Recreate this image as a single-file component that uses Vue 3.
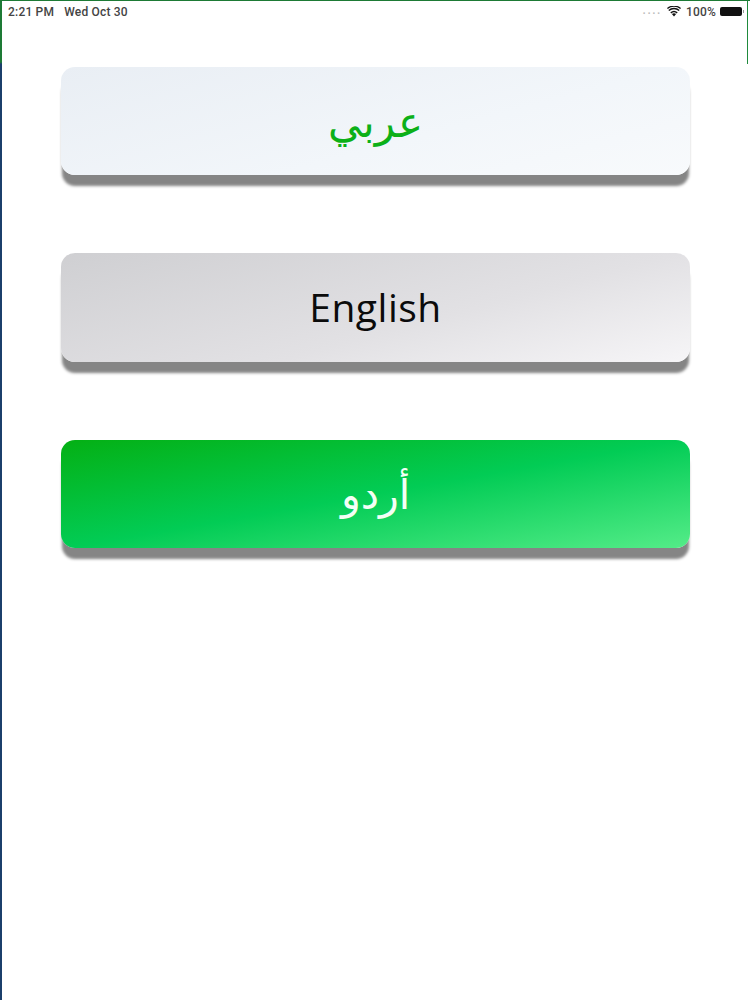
<script setup>
const languages = [
  { label: 'عربي', kind: 'arabic', lang: 'ar' },
  { label: 'English', kind: 'english', lang: 'en' },
  { label: 'أردو', kind: 'urdu', lang: 'ur' },
]
</script>

<template>
  <div class="screen">
    <div class="status-bar">
      <div class="status-left">
        <span>2:21 PM</span>
        <span>Wed Oct 30</span>
      </div>
      <div class="status-right">
        <span class="signal">....</span>
        <svg class="wifi" width="14" height="11" viewBox="0 0 14 11">
          <path d="M7 10.6 4.9 8.1a3.2 3.2 0 0 1 4.2 0z" fill="#111" />
          <path d="M3.8 6.9a5 5 0 0 1 6.4 0" fill="none" stroke="#111" stroke-width="1.5" />
          <path d="M1.8 4.5a8 8 0 0 1 10.4 0" fill="none" stroke="#111" stroke-width="1.5" />
          <path d="M.4 2.5a10.2 10.2 0 0 1 13.2 0" fill="none" stroke="#111" stroke-width="1.2" />
        </svg>
        <span class="percent">100%</span>
        <span class="battery"></span>
      </div>
    </div>
    <div class="buttons">
      <button
        v-for="item in languages"
        :key="item.kind"
        class="lang-button"
        :class="item.kind"
        :lang="item.lang"
        type="button">
        {{ item.label }}
      </button>
    </div>
  </div>
</template>

<style>
html,
body {
  margin: 0;
  background: #fff;
}
</style>

<style scoped>
.screen {
  position: relative;
  box-sizing: border-box;
  width: 750px;
  height: 1000px;
  overflow: hidden;
  background: #fff;
  border-top: 1px solid #2a2f2a;
  border-left: 2px solid;
  border-image: linear-gradient(180deg, #1d7a35 0, #1d7a35 62px, #1b3f6b 64px, #1b3f6b 100%) 1;
}
/* green edge on the right of the status area */
.screen::after {
  content: "";
  position: absolute;
  top: 0;
  right: 2px;
  width: 1px;
  height: 63px;
  background: #1f8a3c;
}
.status-bar {
  display: flex;
  justify-content: space-between;
  align-items: center;
  height: 21px;
  padding: 0 8px 0 6px;
  font-family: Roboto, "Liberation Sans", sans-serif;
  font-size: 12px;
  font-weight: 500;
  letter-spacing: 0.2px;
  color: #444;
}
.status-left {
  display: flex;
  gap: 10px;
}
.status-right {
  display: flex;
  align-items: center;
  gap: 5px;
}
.signal {
  color: #bbb;
  letter-spacing: 1.5px;
  margin-bottom: 3px;
}
.percent {
  margin-right: -1px;
}
.battery {
  position: relative;
  width: 22px;
  height: 9px;
  background: #111;
  border-radius: 2px;
}
.battery::after {
  content: "";
  position: absolute;
  top: 3px;
  right: -2px;
  width: 1px;
  height: 3px;
  background: #999;
}
.buttons {
  display: flex;
  flex-direction: column;
  gap: 78px;
  padding: 45px 60px 0 59px;
}
.lang-button {
  display: block;
  width: 100%;
  height: 108.4px;
  padding: 4px 0 0;
  border: 0;
  border-radius: 14px;
  font-family: "DejaVu Sans", sans-serif;
  font-size: 42px;
  line-height: 1;
  text-align: center;
  box-shadow: 0 12px 3px -1px #858585;
}
.arabic {
  background: linear-gradient(165deg, #e9eef4 0%, #f2f6fa 60%, #f8fafc 100%);
  color: #0cb018;
}
.english {
  padding: 0 0 2px;
  background: linear-gradient(165deg, #cfcfd2 0%, #e2e1e4 60%, #f6f5f7 100%);
  color: #0b0b0b;
  font-family: "Open Sans", sans-serif;
  font-size: 39px;
  font-weight: 500;
  letter-spacing: 0.5px;
}
.urdu {
  background: linear-gradient(170deg, #04b014 0%, #02cc55 50%, #54ec88 100%);
  color: #f4fff6;
  font-size: 41px;
}
</style>
